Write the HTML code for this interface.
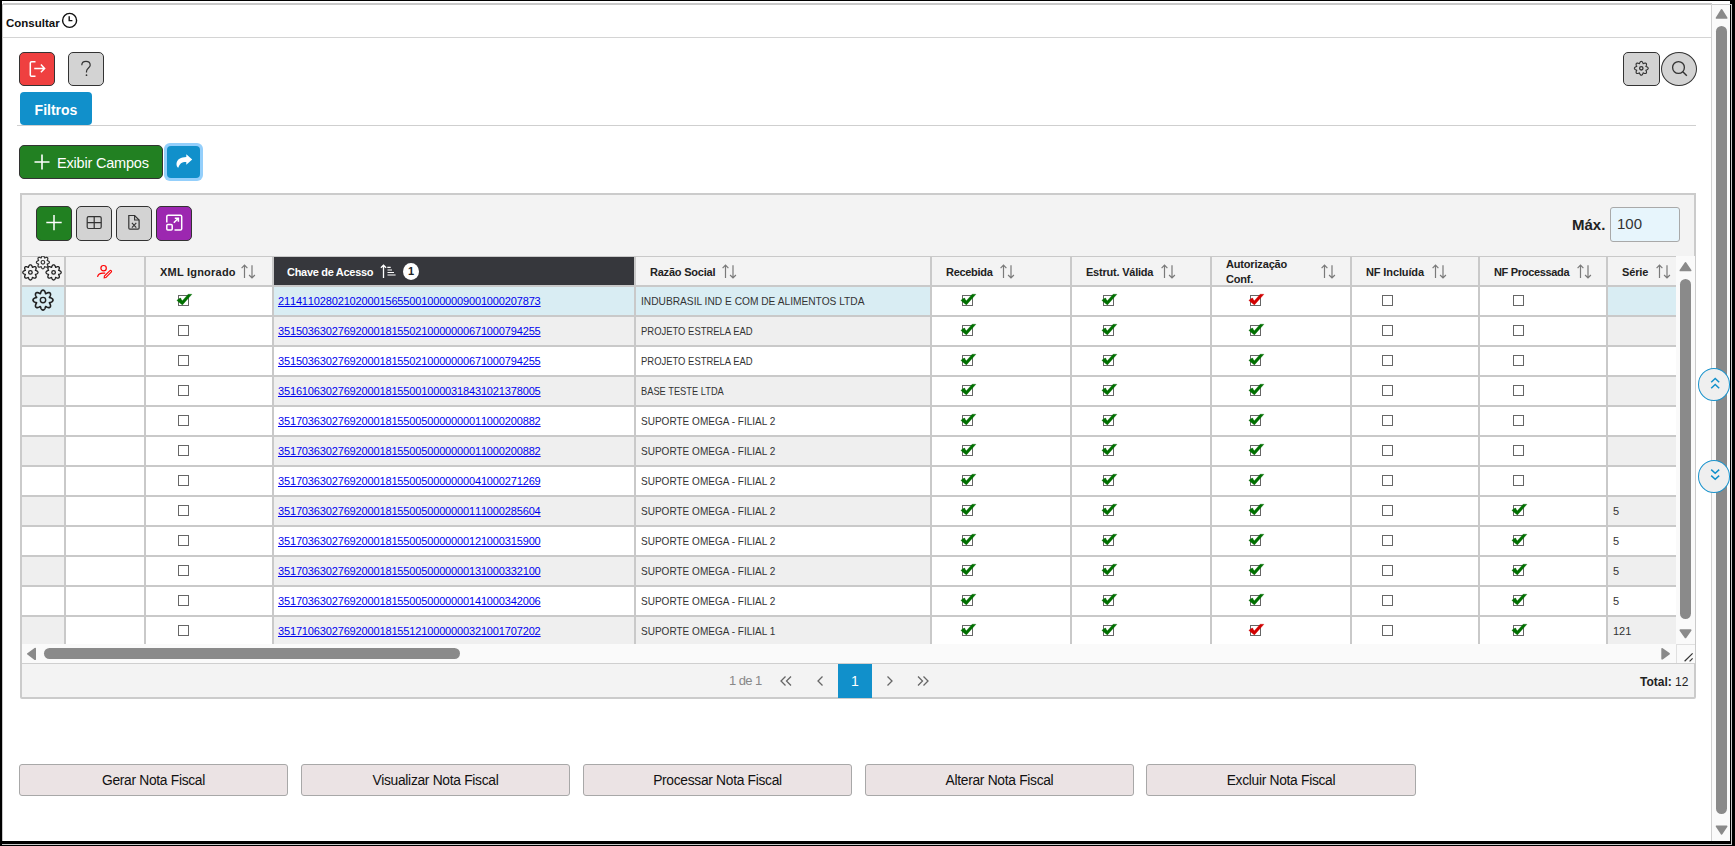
<!DOCTYPE html>
<html><head><meta charset="utf-8"><title>Consultar</title>
<style>
*{box-sizing:border-box}
html,body{margin:0;padding:0}
body{width:1735px;height:846px;overflow:hidden;background:#000;position:relative;font-family:"Liberation Sans", sans-serif;color:#222}
.a{position:absolute}
.btn{position:absolute;border:1px solid #333;border-radius:5px}
.hl{position:absolute;background:#c9c9c9}
.ht{position:absolute;font-size:11px;font-weight:bold;color:#222;white-space:nowrap;line-height:14px}
.cell{position:absolute;font-size:11px;color:#333;white-space:nowrap}
.lk{position:absolute;font-size:11px;color:#0000ee;text-decoration:underline;white-space:nowrap;letter-spacing:-0.15px;font-kerning:none}
.cb{position:absolute;width:11px;height:11px;border:1px solid #666;background:#fff}
.ck{position:absolute}
.bb{position:absolute;top:764px;width:269px;height:32px;background:#ebe3e4;border:1px solid #a8a8a8;border-radius:3px;font-size:13.8px;letter-spacing:-0.3px;color:#111;text-align:center;line-height:32px}
</style></head><body>

<div class="a" style="left:2px;top:1px;width:1728px;height:840px;background:#fff"></div>
<div class="a" style="left:2px;top:4px;width:1px;height:837px;background:#c8c8c8"></div>
<div class="a" style="left:3px;top:3px;width:1709px;height:2px;background:#c8c8c8"></div>
<div class="a" style="left:1712px;top:4px;width:20px;height:1px;background:#c8c8c8"></div>
<div class="a" style="left:1731px;top:4px;width:1px;height:841px;background:#c8c8c8"></div>
<div class="a" style="left:2px;top:844px;width:1730px;height:1px;background:#c8c8c8"></div>
<div class="a" style="left:6px;top:16px;font-size:11.5px;font-weight:bold;color:#111;line-height:14px">Consultar</div>
<svg class="a" style="left:61px;top:12px" width="17" height="17" viewBox="0 0 17 17"><circle cx="8.6" cy="8.4" r="7" fill="none" stroke="#111" stroke-width="1.4"/><path d="M8.2 4.2V8.6H11.4" fill="none" stroke="#111" stroke-width="1.4"/></svg>
<div class="a" style="left:3px;top:37px;width:1709px;height:1px;background:#d4d4d4"></div>
<div class="a" style="left:1711px;top:4px;width:1px;height:837px;background:#d0d0d0"></div>
<div class="a" style="left:1712px;top:5px;width:18px;height:836px;background:#fafafa"></div>
<svg class="a" style="left:1712px;top:5px" width="18" height="16" viewBox="0 0 18 16"><path d="M9.6 4.9L14.6 12.9H4.6Z" fill="#8a8a8a" stroke="#8a8a8a" stroke-width="1.8" stroke-linejoin="round"/></svg>
<div class="a" style="left:1716px;top:26px;width:11px;height:788px;background:#8a8a8a;border-radius:6px"></div>
<svg class="a" style="left:1712px;top:822px" width="18" height="16" viewBox="0 0 18 16"><path d="M4.6 4.3H14.6L9.6 11.8Z" fill="#8a8a8a" stroke="#8a8a8a" stroke-width="1.8" stroke-linejoin="round"/></svg>
<div class="btn" style="left:19px;top:52px;width:36px;height:34px;background:#ef4040"></div>
<svg class="a" style="left:19px;top:52px" width="36" height="34" viewBox="0 0 36 34"><path d="M16.5 9.8H12.6Q11.3 9.8 11.3 11.1V22.9Q11.3 24.2 12.6 24.2H16.5" fill="none" stroke="#fff" stroke-width="1.5"/><path d="M15.2 16.4H25.4M21.9 12.6L25.6 16.4L21.9 20.2" fill="none" stroke="#fff" stroke-width="1.5"/></svg>
<div class="btn" style="left:68px;top:52px;width:36px;height:34px;background:#d3d3d3"></div>
<svg class="a" style="left:68px;top:52px" width="36" height="34" viewBox="0 0 36 34"><path d="M13.8 13.2C13.8 10.7 15.6 9.4 18 9.4C20.4 9.4 22.2 11 22.2 13.2C22.2 15.8 18.5 16.4 18.5 19.4V20.4" fill="none" stroke="#333" stroke-width="1.2"/><circle cx="18.5" cy="23.2" r="0.85" fill="#333"/></svg>
<div class="btn" style="left:1623px;top:52px;width:37px;height:34px;background:#d3d3d3"></div>
<svg class="a" style="left:1623px;top:52px" width="37" height="34" viewBox="0 0 37 34"><path d="M25.20 16.30 L25.15 16.64 L24.99 16.96 L24.73 17.25 L24.40 17.51 L24.01 17.73 L23.59 17.91 L23.18 18.05 L22.83 18.18 L22.98 18.52 L23.18 18.91 L23.35 19.33 L23.47 19.76 L23.52 20.17 L23.49 20.56 L23.38 20.90 L23.18 21.18 L22.90 21.38 L22.56 21.49 L22.17 21.52 L21.76 21.47 L21.33 21.35 L20.91 21.18 L20.52 20.98 L20.18 20.83 L20.05 21.18 L19.91 21.59 L19.73 22.01 L19.51 22.40 L19.25 22.73 L18.96 22.99 L18.64 23.15 L18.30 23.20 L17.96 23.15 L17.64 22.99 L17.35 22.73 L17.09 22.40 L16.87 22.01 L16.69 21.59 L16.55 21.18 L16.42 20.83 L16.08 20.98 L15.69 21.18 L15.27 21.35 L14.84 21.47 L14.43 21.52 L14.04 21.49 L13.70 21.38 L13.42 21.18 L13.22 20.90 L13.11 20.56 L13.08 20.17 L13.13 19.76 L13.25 19.33 L13.42 18.91 L13.62 18.52 L13.77 18.18 L13.42 18.05 L13.01 17.91 L12.59 17.73 L12.20 17.51 L11.87 17.25 L11.61 16.96 L11.45 16.64 L11.40 16.30 L11.45 15.96 L11.61 15.64 L11.87 15.35 L12.20 15.09 L12.59 14.87 L13.01 14.69 L13.42 14.55 L13.77 14.42 L13.62 14.08 L13.42 13.69 L13.25 13.27 L13.13 12.84 L13.08 12.43 L13.11 12.04 L13.22 11.70 L13.42 11.42 L13.70 11.22 L14.04 11.11 L14.43 11.08 L14.84 11.13 L15.27 11.25 L15.69 11.42 L16.08 11.62 L16.42 11.77 L16.55 11.42 L16.69 11.01 L16.87 10.59 L17.09 10.20 L17.35 9.87 L17.64 9.61 L17.96 9.45 L18.30 9.40 L18.64 9.45 L18.96 9.61 L19.25 9.87 L19.51 10.20 L19.73 10.59 L19.91 11.01 L20.05 11.42 L20.18 11.77 L20.52 11.62 L20.91 11.42 L21.33 11.25 L21.76 11.13 L22.17 11.08 L22.56 11.11 L22.90 11.22 L23.18 11.42 L23.38 11.70 L23.49 12.04 L23.52 12.43 L23.47 12.84 L23.35 13.27 L23.18 13.69 L22.98 14.08 L22.83 14.42 L23.18 14.55 L23.59 14.69 L24.01 14.87 L24.40 15.09 L24.73 15.35 L24.99 15.64 L25.15 15.96Z" fill="none" stroke="#333" stroke-width="1.1" stroke-linejoin="round"/><circle cx="18.3" cy="16.3" r="1.7" fill="none" stroke="#333" stroke-width="1.3"/></svg>
<div class="a" style="left:1661px;top:52px;width:36px;height:34px;background:#d3d3d3;border:1px solid #333;border-radius:50%"></div>
<svg class="a" style="left:1661px;top:52px" width="36" height="35" viewBox="0 0 36 35"><circle cx="17.5" cy="15.5" r="5.9" fill="none" stroke="#333" stroke-width="1.3"/><path d="M21.8 19.8L25.8 23.8" stroke="#333" stroke-width="1.4"/></svg>
<div class="a" style="left:20px;top:92px;width:72px;height:33px;background:#1190cb;border-radius:4px;color:#fff;font-size:14px;font-weight:bold;text-align:center;line-height:37px">Filtros</div>
<div class="a" style="left:17px;top:125px;width:1679px;height:1px;background:#cfcfcf"></div>
<div class="btn" style="left:19px;top:145px;width:144px;height:34px;background:#228022;color:#fff;font-size:14.5px;line-height:34px"><span class="a" style="left:37px;top:0;letter-spacing:-0.2px">Exibir Campos</span></div>
<svg class="a" style="left:33px;top:153px" width="18" height="18" viewBox="0 0 18 18"><path d="M9 1.5V16.5M1.5 9H16.5" stroke="#fff" stroke-width="1.6"/></svg>
<div class="a" style="left:164px;top:143px;width:39px;height:38px;background:#94cffb;border-radius:6px"></div>
<div class="a" style="left:167px;top:146px;width:33px;height:32px;background:#1190cb;border-radius:4px"></div>
<svg class="a" style="left:167px;top:146px" width="33" height="32" viewBox="0 0 33 32"><path d="M19.3 8.2L25.2 13.5L19.3 18.8V15.9C15.2 15.7 12.6 17.2 11.3 21.8C10.2 21.3 9.3 19.6 9.5 17.5C10.1 13.2 13.8 11.1 19.3 11Z" fill="#fff"/></svg>
<div class="a" style="left:20px;top:193px;width:1676px;height:506px;background:#f3f3f3;border:2px solid #cbcbcb;border-radius:0 0 2px 2px"></div>
<div class="btn" style="left:36px;top:206px;width:36px;height:35px;background:#218021"></div>
<svg class="a" style="left:36px;top:206px" width="36" height="35" viewBox="0 0 36 35"><path d="M18 9V24.2M10.3 16.6H25.7" stroke="#fff" stroke-width="1.5"/></svg>
<div class="btn" style="left:76px;top:206px;width:36px;height:35px;background:#d3d3d3"></div>
<svg class="a" style="left:76px;top:206px" width="36" height="35" viewBox="0 0 36 35"><rect x="11.2" y="10.6" width="14" height="11.9" rx="1.5" fill="none" stroke="#333" stroke-width="1.2"/><path d="M18.2 10.6V22.5M11.2 16.55H25.2" stroke="#333" stroke-width="1.2"/></svg>
<div class="btn" style="left:116px;top:206px;width:36px;height:35px;background:#d3d3d3"></div>
<svg class="a" style="left:116px;top:206px" width="36" height="35" viewBox="0 0 36 35"><path d="M12.8 9.5H18.6L23.1 14V22C23.1 22.7 22.6 23.2 21.9 23.2H14C13.3 23.2 12.8 22.7 12.8 22Z" fill="none" stroke="#333" stroke-width="1.2"/><path d="M18.6 9.5V14H23.1" fill="none" stroke="#333" stroke-width="1.1"/><path d="M15.9 16.8L20.3 21.6M20.3 16.8L15.9 21.6" stroke="#333" stroke-width="1.1"/></svg>
<div class="btn" style="left:156px;top:206px;width:36px;height:35px;background:#9c27b0"></div>
<svg class="a" style="left:156px;top:206px" width="36" height="35" viewBox="0 0 36 35"><path d="M10.8 16.5V10.5C10.8 9.7 11.3 9.2 12.1 9.2H24.4C25.2 9.2 25.7 9.7 25.7 10.5V22.8C25.7 23.6 25.2 24.1 24.4 24.1H18.5" fill="none" stroke="#fff" stroke-width="1.5"/><rect x="10.8" y="18.6" width="5.4" height="5.4" rx="1" fill="none" stroke="#fff" stroke-width="1.5"/><path d="M17.8 16.8L22.2 12.4M18.8 12.2H22.4V15.8" fill="none" stroke="#fff" stroke-width="1.5"/></svg>
<div class="a" style="left:1572px;top:216px;font-size:15px;font-weight:bold;color:#222;line-height:18px">Máx.</div>
<div class="a" style="left:1610px;top:207px;width:70px;height:35px;background:#e7f5fc;border:1px solid #a9a9a9;border-radius:3px;font-size:15px;color:#333;line-height:32px;padding-left:6px">100</div>
<div class="a" style="left:22px;top:256px;width:1654px;height:388px;overflow:hidden;background:#fff">
<div class="a" style="left:0px;top:0px;width:1654px;height:1px;background:#c9c9c9;"></div>
<div class="a" style="left:0px;top:1px;width:1654px;height:28px;background:#f3f3f3;"></div>
<div class="a" style="left:252px;top:1px;width:360px;height:28px;background:#36373c;"></div>
<div class="a" style="left:0px;top:31px;width:42px;height:28px;background:#d9edf3;"></div>
<div class="a" style="left:252px;top:31px;width:360px;height:28px;background:#d9edf3;"></div>
<div class="a" style="left:614px;top:31px;width:294px;height:28px;background:#d9edf3;"></div>
<div class="a" style="left:1586px;top:31px;width:68px;height:28px;background:#d9edf3;"></div>
<div class="a" style="left:0px;top:61px;width:42px;height:28px;background:#efefef;"></div>
<div class="a" style="left:252px;top:61px;width:360px;height:28px;background:#efefef;"></div>
<div class="a" style="left:614px;top:61px;width:294px;height:28px;background:#efefef;"></div>
<div class="a" style="left:1586px;top:61px;width:68px;height:28px;background:#efefef;"></div>
<div class="a" style="left:0px;top:91px;width:42px;height:28px;background:#ffffff;"></div>
<div class="a" style="left:252px;top:91px;width:360px;height:28px;background:#ffffff;"></div>
<div class="a" style="left:614px;top:91px;width:294px;height:28px;background:#ffffff;"></div>
<div class="a" style="left:1586px;top:91px;width:68px;height:28px;background:#ffffff;"></div>
<div class="a" style="left:0px;top:121px;width:42px;height:28px;background:#efefef;"></div>
<div class="a" style="left:252px;top:121px;width:360px;height:28px;background:#efefef;"></div>
<div class="a" style="left:614px;top:121px;width:294px;height:28px;background:#efefef;"></div>
<div class="a" style="left:1586px;top:121px;width:68px;height:28px;background:#efefef;"></div>
<div class="a" style="left:0px;top:151px;width:42px;height:28px;background:#ffffff;"></div>
<div class="a" style="left:252px;top:151px;width:360px;height:28px;background:#ffffff;"></div>
<div class="a" style="left:614px;top:151px;width:294px;height:28px;background:#ffffff;"></div>
<div class="a" style="left:1586px;top:151px;width:68px;height:28px;background:#ffffff;"></div>
<div class="a" style="left:0px;top:181px;width:42px;height:28px;background:#efefef;"></div>
<div class="a" style="left:252px;top:181px;width:360px;height:28px;background:#efefef;"></div>
<div class="a" style="left:614px;top:181px;width:294px;height:28px;background:#efefef;"></div>
<div class="a" style="left:1586px;top:181px;width:68px;height:28px;background:#efefef;"></div>
<div class="a" style="left:0px;top:211px;width:42px;height:28px;background:#ffffff;"></div>
<div class="a" style="left:252px;top:211px;width:360px;height:28px;background:#ffffff;"></div>
<div class="a" style="left:614px;top:211px;width:294px;height:28px;background:#ffffff;"></div>
<div class="a" style="left:1586px;top:211px;width:68px;height:28px;background:#ffffff;"></div>
<div class="a" style="left:0px;top:241px;width:42px;height:28px;background:#efefef;"></div>
<div class="a" style="left:252px;top:241px;width:360px;height:28px;background:#efefef;"></div>
<div class="a" style="left:614px;top:241px;width:294px;height:28px;background:#efefef;"></div>
<div class="a" style="left:1586px;top:241px;width:68px;height:28px;background:#efefef;"></div>
<div class="a" style="left:0px;top:271px;width:42px;height:28px;background:#ffffff;"></div>
<div class="a" style="left:252px;top:271px;width:360px;height:28px;background:#ffffff;"></div>
<div class="a" style="left:614px;top:271px;width:294px;height:28px;background:#ffffff;"></div>
<div class="a" style="left:1586px;top:271px;width:68px;height:28px;background:#ffffff;"></div>
<div class="a" style="left:0px;top:301px;width:42px;height:28px;background:#efefef;"></div>
<div class="a" style="left:252px;top:301px;width:360px;height:28px;background:#efefef;"></div>
<div class="a" style="left:614px;top:301px;width:294px;height:28px;background:#efefef;"></div>
<div class="a" style="left:1586px;top:301px;width:68px;height:28px;background:#efefef;"></div>
<div class="a" style="left:0px;top:331px;width:42px;height:28px;background:#ffffff;"></div>
<div class="a" style="left:252px;top:331px;width:360px;height:28px;background:#ffffff;"></div>
<div class="a" style="left:614px;top:331px;width:294px;height:28px;background:#ffffff;"></div>
<div class="a" style="left:1586px;top:331px;width:68px;height:28px;background:#ffffff;"></div>
<div class="a" style="left:0px;top:361px;width:42px;height:28px;background:#efefef;"></div>
<div class="a" style="left:252px;top:361px;width:360px;height:28px;background:#efefef;"></div>
<div class="a" style="left:614px;top:361px;width:294px;height:28px;background:#efefef;"></div>
<div class="a" style="left:1586px;top:361px;width:68px;height:28px;background:#efefef;"></div>
<div class="a" style="left:0px;top:29px;width:1654px;height:2px;background:#c9c9c9;"></div>
<div class="a" style="left:0px;top:59px;width:1654px;height:2px;background:#c9c9c9;"></div>
<div class="a" style="left:0px;top:89px;width:1654px;height:2px;background:#c9c9c9;"></div>
<div class="a" style="left:0px;top:119px;width:1654px;height:2px;background:#c9c9c9;"></div>
<div class="a" style="left:0px;top:149px;width:1654px;height:2px;background:#c9c9c9;"></div>
<div class="a" style="left:0px;top:179px;width:1654px;height:2px;background:#c9c9c9;"></div>
<div class="a" style="left:0px;top:209px;width:1654px;height:2px;background:#c9c9c9;"></div>
<div class="a" style="left:0px;top:239px;width:1654px;height:2px;background:#c9c9c9;"></div>
<div class="a" style="left:0px;top:269px;width:1654px;height:2px;background:#c9c9c9;"></div>
<div class="a" style="left:0px;top:299px;width:1654px;height:2px;background:#c9c9c9;"></div>
<div class="a" style="left:0px;top:329px;width:1654px;height:2px;background:#c9c9c9;"></div>
<div class="a" style="left:0px;top:359px;width:1654px;height:2px;background:#c9c9c9;"></div>
<div class="a" style="left:0px;top:389px;width:1654px;height:2px;background:#c9c9c9;"></div>
<div class="a" style="left:42px;top:1px;width:2px;height:387px;background:#c9c9c9;"></div>
<div class="a" style="left:122px;top:1px;width:2px;height:387px;background:#c9c9c9;"></div>
<div class="a" style="left:250px;top:1px;width:2px;height:387px;background:#c9c9c9;"></div>
<div class="a" style="left:612px;top:1px;width:2px;height:387px;background:#c9c9c9;"></div>
<div class="a" style="left:908px;top:1px;width:2px;height:387px;background:#c9c9c9;"></div>
<div class="a" style="left:1048px;top:1px;width:2px;height:387px;background:#c9c9c9;"></div>
<div class="a" style="left:1188px;top:1px;width:2px;height:387px;background:#c9c9c9;"></div>
<div class="a" style="left:1328px;top:1px;width:2px;height:387px;background:#c9c9c9;"></div>
<div class="a" style="left:1456px;top:1px;width:2px;height:387px;background:#c9c9c9;"></div>
<div class="a" style="left:1584px;top:1px;width:2px;height:387px;background:#c9c9c9;"></div>
</div>
<div class="ht" style="left:160px;top:265px;letter-spacing:0.22px">XML Ignorado</div>
<svg class="a" style="left:241px;top:264px" width="15" height="15" viewBox="0 0 15 15"><path d="M3.5 1.2V14M0.6 4.2L3.5 1.2L6.4 4.2" fill="none" stroke="#7a7a7a" stroke-width="1.2"/><path d="M11 1.2V14M8.1 11L11 14L13.9 11" fill="none" stroke="#7a7a7a" stroke-width="1.2"/></svg>
<div class="ht" style="left:650px;top:265px;letter-spacing:-0.22px">Razão Social</div>
<svg class="a" style="left:722px;top:264px" width="15" height="15" viewBox="0 0 15 15"><path d="M3.5 1.2V14M0.6 4.2L3.5 1.2L6.4 4.2" fill="none" stroke="#7a7a7a" stroke-width="1.2"/><path d="M11 1.2V14M8.1 11L11 14L13.9 11" fill="none" stroke="#7a7a7a" stroke-width="1.2"/></svg>
<div class="ht" style="left:946px;top:265px;letter-spacing:-0.3px">Recebida</div>
<svg class="a" style="left:1000px;top:264px" width="15" height="15" viewBox="0 0 15 15"><path d="M3.5 1.2V14M0.6 4.2L3.5 1.2L6.4 4.2" fill="none" stroke="#7a7a7a" stroke-width="1.2"/><path d="M11 1.2V14M8.1 11L11 14L13.9 11" fill="none" stroke="#7a7a7a" stroke-width="1.2"/></svg>
<div class="ht" style="left:1086px;top:265px;letter-spacing:-0.22px">Estrut. Válida</div>
<svg class="a" style="left:1161px;top:264px" width="15" height="15" viewBox="0 0 15 15"><path d="M3.5 1.2V14M0.6 4.2L3.5 1.2L6.4 4.2" fill="none" stroke="#7a7a7a" stroke-width="1.2"/><path d="M11 1.2V14M8.1 11L11 14L13.9 11" fill="none" stroke="#7a7a7a" stroke-width="1.2"/></svg>
<div class="ht" style="left:1366px;top:265px;letter-spacing:-0.12px">NF Incluída</div>
<svg class="a" style="left:1432px;top:264px" width="15" height="15" viewBox="0 0 15 15"><path d="M3.5 1.2V14M0.6 4.2L3.5 1.2L6.4 4.2" fill="none" stroke="#7a7a7a" stroke-width="1.2"/><path d="M11 1.2V14M8.1 11L11 14L13.9 11" fill="none" stroke="#7a7a7a" stroke-width="1.2"/></svg>
<div class="ht" style="left:1494px;top:265px;letter-spacing:-0.32px">NF Processada</div>
<svg class="a" style="left:1577px;top:264px" width="15" height="15" viewBox="0 0 15 15"><path d="M3.5 1.2V14M0.6 4.2L3.5 1.2L6.4 4.2" fill="none" stroke="#7a7a7a" stroke-width="1.2"/><path d="M11 1.2V14M8.1 11L11 14L13.9 11" fill="none" stroke="#7a7a7a" stroke-width="1.2"/></svg>
<div class="ht" style="left:1622px;top:265px;letter-spacing:-0.15px">Série</div>
<svg class="a" style="left:1656px;top:264px" width="15" height="15" viewBox="0 0 15 15"><path d="M3.5 1.2V14M0.6 4.2L3.5 1.2L6.4 4.2" fill="none" stroke="#7a7a7a" stroke-width="1.2"/><path d="M11 1.2V14M8.1 11L11 14L13.9 11" fill="none" stroke="#7a7a7a" stroke-width="1.2"/></svg>
<div class="ht" style="left:1226px;top:257px;line-height:15px;letter-spacing:-0.17px">Autorização<br>Conf.</div>
<svg class="a" style="left:1321px;top:264px" width="15" height="15" viewBox="0 0 15 15"><path d="M3.5 1.2V14M0.6 4.2L3.5 1.2L6.4 4.2" fill="none" stroke="#7a7a7a" stroke-width="1.2"/><path d="M11 1.2V14M8.1 11L11 14L13.9 11" fill="none" stroke="#7a7a7a" stroke-width="1.2"/></svg>
<div class="ht" style="left:287px;top:265px;color:#fff;letter-spacing:-0.3px">Chave de Acesso</div>
<svg class="a" style="left:380px;top:262px" width="20" height="18" viewBox="0 0 20 18"><path d="M3.5 3.2V16M0.9 5.8L3.5 3.2L6.1 5.8" fill="none" stroke="#fff" stroke-width="1.3"/><path d="M7.3 5.3H10.7M7.5 8H12M7.5 10.5H14M7.5 13H15.6" stroke="#fff" stroke-width="1.2"/></svg>
<div class="a" style="left:403px;top:263px;width:16px;height:17px;border-radius:50%;background:#fff;color:#222;font-size:11px;font-weight:bold;text-align:center;line-height:17px">1</div>
<svg class="a" style="left:22px;top:256px" width="42" height="29" viewBox="0 0 42 29"><path d="M27.40 6.30 L27.35 6.62 L27.20 6.92 L26.96 7.20 L26.64 7.44 L26.27 7.65 L25.88 7.81 L25.48 7.94 L25.15 8.06 L25.30 8.38 L25.49 8.75 L25.65 9.15 L25.77 9.55 L25.82 9.95 L25.79 10.31 L25.68 10.64 L25.50 10.90 L25.24 11.08 L24.91 11.19 L24.55 11.22 L24.15 11.17 L23.75 11.05 L23.35 10.89 L22.98 10.70 L22.66 10.55 L22.54 10.88 L22.41 11.28 L22.25 11.67 L22.04 12.04 L21.80 12.36 L21.52 12.60 L21.22 12.75 L20.90 12.80 L20.58 12.75 L20.28 12.60 L20.00 12.36 L19.76 12.04 L19.55 11.67 L19.39 11.28 L19.26 10.88 L19.14 10.55 L18.82 10.70 L18.45 10.89 L18.05 11.05 L17.65 11.17 L17.25 11.22 L16.89 11.19 L16.56 11.08 L16.30 10.90 L16.12 10.64 L16.01 10.31 L15.98 9.95 L16.03 9.55 L16.15 9.15 L16.31 8.75 L16.50 8.38 L16.65 8.06 L16.32 7.94 L15.92 7.81 L15.53 7.65 L15.16 7.44 L14.84 7.20 L14.60 6.92 L14.45 6.62 L14.40 6.30 L14.45 5.98 L14.60 5.68 L14.84 5.40 L15.16 5.16 L15.53 4.95 L15.92 4.79 L16.32 4.66 L16.65 4.54 L16.50 4.22 L16.31 3.85 L16.15 3.45 L16.03 3.05 L15.98 2.65 L16.01 2.29 L16.12 1.96 L16.30 1.70 L16.56 1.52 L16.89 1.41 L17.25 1.38 L17.65 1.43 L18.05 1.55 L18.45 1.71 L18.82 1.90 L19.14 2.05 L19.26 1.72 L19.39 1.32 L19.55 0.93 L19.76 0.56 L20.00 0.24 L20.28 0.00 L20.58 -0.15 L20.90 -0.20 L21.22 -0.15 L21.52 0.00 L21.80 0.24 L22.04 0.56 L22.25 0.93 L22.41 1.32 L22.54 1.72 L22.66 2.05 L22.98 1.90 L23.35 1.71 L23.75 1.55 L24.15 1.43 L24.55 1.38 L24.91 1.41 L25.24 1.52 L25.50 1.70 L25.68 1.96 L25.79 2.29 L25.82 2.65 L25.77 3.05 L25.65 3.45 L25.49 3.85 L25.30 4.22 L25.15 4.54 L25.48 4.66 L25.88 4.79 L26.27 4.95 L26.64 5.16 L26.96 5.40 L27.20 5.68 L27.35 5.98Z" fill="none" stroke="#333" stroke-width="1.2" stroke-linejoin="round"/><circle cx="20.9" cy="6.3" r="1.8" fill="none" stroke="#333" stroke-width="1.2"/><path d="M16.00 16.40 L15.94 16.77 L15.76 17.13 L15.49 17.45 L15.12 17.74 L14.69 17.98 L14.23 18.17 L13.78 18.32 L13.39 18.47 L13.56 18.84 L13.78 19.27 L13.96 19.73 L14.10 20.21 L14.15 20.67 L14.12 21.09 L13.99 21.47 L13.77 21.77 L13.47 21.99 L13.09 22.12 L12.67 22.15 L12.21 22.10 L11.73 21.96 L11.27 21.78 L10.84 21.56 L10.47 21.39 L10.32 21.78 L10.17 22.23 L9.98 22.69 L9.74 23.12 L9.45 23.49 L9.13 23.76 L8.77 23.94 L8.40 24.00 L8.03 23.94 L7.67 23.76 L7.35 23.49 L7.06 23.12 L6.82 22.69 L6.63 22.23 L6.48 21.78 L6.33 21.39 L5.96 21.56 L5.53 21.78 L5.07 21.96 L4.59 22.10 L4.13 22.15 L3.71 22.12 L3.33 21.99 L3.03 21.77 L2.81 21.47 L2.68 21.09 L2.65 20.67 L2.70 20.21 L2.84 19.73 L3.02 19.27 L3.24 18.84 L3.41 18.47 L3.02 18.32 L2.57 18.17 L2.11 17.98 L1.68 17.74 L1.31 17.45 L1.04 17.13 L0.86 16.77 L0.80 16.40 L0.86 16.03 L1.04 15.67 L1.31 15.35 L1.68 15.06 L2.11 14.82 L2.57 14.63 L3.02 14.48 L3.41 14.33 L3.24 13.96 L3.02 13.53 L2.84 13.07 L2.70 12.59 L2.65 12.13 L2.68 11.71 L2.81 11.33 L3.03 11.03 L3.33 10.81 L3.71 10.68 L4.13 10.65 L4.59 10.70 L5.07 10.84 L5.53 11.02 L5.96 11.24 L6.33 11.41 L6.48 11.02 L6.63 10.57 L6.82 10.11 L7.06 9.68 L7.35 9.31 L7.67 9.04 L8.03 8.86 L8.40 8.80 L8.77 8.86 L9.13 9.04 L9.45 9.31 L9.74 9.68 L9.98 10.11 L10.17 10.57 L10.32 11.02 L10.47 11.41 L10.84 11.24 L11.27 11.02 L11.73 10.84 L12.21 10.70 L12.67 10.65 L13.09 10.68 L13.47 10.81 L13.77 11.03 L13.99 11.33 L14.12 11.71 L14.15 12.13 L14.10 12.59 L13.96 13.07 L13.78 13.53 L13.56 13.96 L13.39 14.33 L13.78 14.48 L14.23 14.63 L14.69 14.82 L15.12 15.06 L15.49 15.35 L15.76 15.67 L15.94 16.03Z" fill="none" stroke="#222" stroke-width="1.3" stroke-linejoin="round"/><circle cx="8.4" cy="16.4" r="1.8" fill="none" stroke="#222" stroke-width="1.3"/><path d="M39.20 16.40 L39.14 16.77 L38.96 17.13 L38.69 17.45 L38.32 17.74 L37.89 17.98 L37.43 18.17 L36.98 18.32 L36.59 18.47 L36.76 18.84 L36.98 19.27 L37.16 19.73 L37.30 20.21 L37.35 20.67 L37.32 21.09 L37.19 21.47 L36.97 21.77 L36.67 21.99 L36.29 22.12 L35.87 22.15 L35.41 22.10 L34.93 21.96 L34.47 21.78 L34.04 21.56 L33.67 21.39 L33.52 21.78 L33.37 22.23 L33.18 22.69 L32.94 23.12 L32.65 23.49 L32.33 23.76 L31.97 23.94 L31.60 24.00 L31.23 23.94 L30.87 23.76 L30.55 23.49 L30.26 23.12 L30.02 22.69 L29.83 22.23 L29.68 21.78 L29.53 21.39 L29.16 21.56 L28.73 21.78 L28.27 21.96 L27.79 22.10 L27.33 22.15 L26.91 22.12 L26.53 21.99 L26.23 21.77 L26.01 21.47 L25.88 21.09 L25.85 20.67 L25.90 20.21 L26.04 19.73 L26.22 19.27 L26.44 18.84 L26.61 18.47 L26.22 18.32 L25.77 18.17 L25.31 17.98 L24.88 17.74 L24.51 17.45 L24.24 17.13 L24.06 16.77 L24.00 16.40 L24.06 16.03 L24.24 15.67 L24.51 15.35 L24.88 15.06 L25.31 14.82 L25.77 14.63 L26.22 14.48 L26.61 14.33 L26.44 13.96 L26.22 13.53 L26.04 13.07 L25.90 12.59 L25.85 12.13 L25.88 11.71 L26.01 11.33 L26.23 11.03 L26.53 10.81 L26.91 10.68 L27.33 10.65 L27.79 10.70 L28.27 10.84 L28.73 11.02 L29.16 11.24 L29.53 11.41 L29.68 11.02 L29.83 10.57 L30.02 10.11 L30.26 9.68 L30.55 9.31 L30.87 9.04 L31.23 8.86 L31.60 8.80 L31.97 8.86 L32.33 9.04 L32.65 9.31 L32.94 9.68 L33.18 10.11 L33.37 10.57 L33.52 11.02 L33.67 11.41 L34.04 11.24 L34.47 11.02 L34.93 10.84 L35.41 10.70 L35.87 10.65 L36.29 10.68 L36.67 10.81 L36.97 11.03 L37.19 11.33 L37.32 11.71 L37.35 12.13 L37.30 12.59 L37.16 13.07 L36.98 13.53 L36.76 13.96 L36.59 14.33 L36.98 14.48 L37.43 14.63 L37.89 14.82 L38.32 15.06 L38.69 15.35 L38.96 15.67 L39.14 16.03Z" fill="none" stroke="#222" stroke-width="1.3" stroke-linejoin="round"/><circle cx="31.6" cy="16.4" r="1.8" fill="none" stroke="#222" stroke-width="1.3"/></svg>
<svg class="a" style="left:94px;top:263px" width="20" height="17" viewBox="0 0 20 17"><circle cx="9.6" cy="5.2" r="2.7" fill="none" stroke="#f00" stroke-width="1.2"/><path d="M3.5 13.9C4.1 11.6 6.1 10.2 9 10.2H11.2" fill="none" stroke="#f00" stroke-width="1.2"/><path d="M11.8 14.6L17.2 9.2C17.7 8.7 17.7 8.1 17.2 7.7C16.8 7.3 16.2 7.3 15.7 7.8L10.4 13.1L10.2 14.8Z" fill="none" stroke="#f00" stroke-width="1.1"/></svg>
<div class="lk" style="left:278px;top:294px;line-height:14px">21141102802102000156550010000009001000207873</div>
<div class="cell" style="left:641px;top:294px;line-height:14px;transform:scaleX(0.9265);transform-origin:0 0">INDUBRASIL IND E COM DE ALIMENTOS LTDA</div>
<div class="cb" style="left:178px;top:295px"></div>
<svg class="a" style="left:176px;top:293px" width="18" height="14" viewBox="0 0 18 14"><path d="M0.9 7.3 L4.1 5.1 L4.6 5.0 L5.3 6.5 L6.4 7.7 L12.2 1.2 L15.9 1.3 L6.4 11.9 L1.7 8.2Z" fill="#006f00" stroke="#006f00" stroke-width="0.35" stroke-linejoin="round"/></svg>
<div class="cb" style="left:962px;top:295px"></div>
<svg class="a" style="left:960px;top:293px" width="18" height="14" viewBox="0 0 18 14"><path d="M0.9 7.3 L4.1 5.1 L4.6 5.0 L5.3 6.5 L6.4 7.7 L12.2 1.2 L15.9 1.3 L6.4 11.9 L1.7 8.2Z" fill="#006f00" stroke="#006f00" stroke-width="0.35" stroke-linejoin="round"/></svg>
<div class="cb" style="left:1103px;top:295px"></div>
<svg class="a" style="left:1101px;top:293px" width="18" height="14" viewBox="0 0 18 14"><path d="M0.9 7.3 L4.1 5.1 L4.6 5.0 L5.3 6.5 L6.4 7.7 L12.2 1.2 L15.9 1.3 L6.4 11.9 L1.7 8.2Z" fill="#006f00" stroke="#006f00" stroke-width="0.35" stroke-linejoin="round"/></svg>
<div class="cb" style="left:1250px;top:295px"></div>
<svg class="a" style="left:1248px;top:293px" width="18" height="14" viewBox="0 0 18 14"><path d="M0.9 7.3 L4.1 5.1 L4.6 5.0 L5.3 6.5 L6.4 7.7 L12.2 1.2 L15.9 1.3 L6.4 11.9 L1.7 8.2Z" fill="#d10000" stroke="#d10000" stroke-width="0.35" stroke-linejoin="round"/></svg>
<div class="cb" style="left:1382px;top:295px"></div>
<div class="cb" style="left:1513px;top:295px"></div>
<svg class="a" style="left:31px;top:288px" width="24" height="24" viewBox="0 0 24 24"><path d="M22.00 12.10 L21.92 12.59 L21.67 13.05 L21.28 13.48 L20.77 13.85 L20.18 14.15 L19.54 14.39 L18.91 14.57 L18.37 14.74 L18.63 15.24 L18.95 15.81 L19.23 16.43 L19.44 17.07 L19.54 17.69 L19.51 18.27 L19.36 18.77 L19.07 19.17 L18.67 19.46 L18.17 19.61 L17.59 19.64 L16.97 19.54 L16.33 19.33 L15.71 19.05 L15.14 18.73 L14.64 18.47 L14.47 19.01 L14.29 19.64 L14.05 20.28 L13.75 20.87 L13.38 21.38 L12.95 21.77 L12.49 22.02 L12.00 22.10 L11.51 22.02 L11.05 21.77 L10.62 21.38 L10.25 20.87 L9.95 20.28 L9.71 19.64 L9.53 19.01 L9.36 18.47 L8.86 18.73 L8.29 19.05 L7.67 19.33 L7.03 19.54 L6.41 19.64 L5.83 19.61 L5.33 19.46 L4.93 19.17 L4.64 18.77 L4.49 18.27 L4.46 17.69 L4.56 17.07 L4.77 16.43 L5.05 15.81 L5.37 15.24 L5.63 14.74 L5.09 14.57 L4.46 14.39 L3.82 14.15 L3.23 13.85 L2.72 13.48 L2.33 13.05 L2.08 12.59 L2.00 12.10 L2.08 11.61 L2.33 11.15 L2.72 10.72 L3.23 10.35 L3.82 10.05 L4.46 9.81 L5.09 9.63 L5.63 9.46 L5.37 8.96 L5.05 8.39 L4.77 7.77 L4.56 7.13 L4.46 6.51 L4.49 5.93 L4.64 5.43 L4.93 5.03 L5.33 4.74 L5.83 4.59 L6.41 4.56 L7.03 4.66 L7.67 4.87 L8.29 5.15 L8.86 5.47 L9.36 5.73 L9.53 5.19 L9.71 4.56 L9.95 3.92 L10.25 3.33 L10.62 2.82 L11.05 2.43 L11.51 2.18 L12.00 2.10 L12.49 2.18 L12.95 2.43 L13.38 2.82 L13.75 3.33 L14.05 3.92 L14.29 4.56 L14.47 5.19 L14.64 5.73 L15.14 5.47 L15.71 5.15 L16.33 4.87 L16.97 4.66 L17.59 4.56 L18.17 4.59 L18.67 4.74 L19.07 5.03 L19.36 5.43 L19.51 5.93 L19.54 6.51 L19.44 7.13 L19.23 7.77 L18.95 8.39 L18.63 8.96 L18.37 9.46 L18.91 9.63 L19.54 9.81 L20.18 10.05 L20.77 10.35 L21.28 10.72 L21.67 11.15 L21.92 11.61Z" fill="none" stroke="#222" stroke-width="1.6" stroke-linejoin="round"/><circle cx="12" cy="12.1" r="2.7" fill="none" stroke="#222" stroke-width="1.4"/></svg>
<div class="lk" style="left:278px;top:324px;line-height:14px">35150363027692000181550210000000671000794255</div>
<div class="cell" style="left:641px;top:324px;line-height:14px;transform:scaleX(0.8591);transform-origin:0 0">PROJETO ESTRELA EAD</div>
<div class="cb" style="left:178px;top:325px"></div>
<div class="cb" style="left:962px;top:325px"></div>
<svg class="a" style="left:960px;top:323px" width="18" height="14" viewBox="0 0 18 14"><path d="M0.9 7.3 L4.1 5.1 L4.6 5.0 L5.3 6.5 L6.4 7.7 L12.2 1.2 L15.9 1.3 L6.4 11.9 L1.7 8.2Z" fill="#006f00" stroke="#006f00" stroke-width="0.35" stroke-linejoin="round"/></svg>
<div class="cb" style="left:1103px;top:325px"></div>
<svg class="a" style="left:1101px;top:323px" width="18" height="14" viewBox="0 0 18 14"><path d="M0.9 7.3 L4.1 5.1 L4.6 5.0 L5.3 6.5 L6.4 7.7 L12.2 1.2 L15.9 1.3 L6.4 11.9 L1.7 8.2Z" fill="#006f00" stroke="#006f00" stroke-width="0.35" stroke-linejoin="round"/></svg>
<div class="cb" style="left:1250px;top:325px"></div>
<svg class="a" style="left:1248px;top:323px" width="18" height="14" viewBox="0 0 18 14"><path d="M0.9 7.3 L4.1 5.1 L4.6 5.0 L5.3 6.5 L6.4 7.7 L12.2 1.2 L15.9 1.3 L6.4 11.9 L1.7 8.2Z" fill="#006f00" stroke="#006f00" stroke-width="0.35" stroke-linejoin="round"/></svg>
<div class="cb" style="left:1382px;top:325px"></div>
<div class="cb" style="left:1513px;top:325px"></div>
<div class="lk" style="left:278px;top:354px;line-height:14px">35150363027692000181550210000000671000794255</div>
<div class="cell" style="left:641px;top:354px;line-height:14px;transform:scaleX(0.8591);transform-origin:0 0">PROJETO ESTRELA EAD</div>
<div class="cb" style="left:178px;top:355px"></div>
<div class="cb" style="left:962px;top:355px"></div>
<svg class="a" style="left:960px;top:353px" width="18" height="14" viewBox="0 0 18 14"><path d="M0.9 7.3 L4.1 5.1 L4.6 5.0 L5.3 6.5 L6.4 7.7 L12.2 1.2 L15.9 1.3 L6.4 11.9 L1.7 8.2Z" fill="#006f00" stroke="#006f00" stroke-width="0.35" stroke-linejoin="round"/></svg>
<div class="cb" style="left:1103px;top:355px"></div>
<svg class="a" style="left:1101px;top:353px" width="18" height="14" viewBox="0 0 18 14"><path d="M0.9 7.3 L4.1 5.1 L4.6 5.0 L5.3 6.5 L6.4 7.7 L12.2 1.2 L15.9 1.3 L6.4 11.9 L1.7 8.2Z" fill="#006f00" stroke="#006f00" stroke-width="0.35" stroke-linejoin="round"/></svg>
<div class="cb" style="left:1250px;top:355px"></div>
<svg class="a" style="left:1248px;top:353px" width="18" height="14" viewBox="0 0 18 14"><path d="M0.9 7.3 L4.1 5.1 L4.6 5.0 L5.3 6.5 L6.4 7.7 L12.2 1.2 L15.9 1.3 L6.4 11.9 L1.7 8.2Z" fill="#006f00" stroke="#006f00" stroke-width="0.35" stroke-linejoin="round"/></svg>
<div class="cb" style="left:1382px;top:355px"></div>
<div class="cb" style="left:1513px;top:355px"></div>
<div class="lk" style="left:278px;top:384px;line-height:14px">35161063027692000181550010000318431021378005</div>
<div class="cell" style="left:641px;top:384px;line-height:14px;transform:scaleX(0.8447);transform-origin:0 0">BASE TESTE LTDA</div>
<div class="cb" style="left:178px;top:385px"></div>
<div class="cb" style="left:962px;top:385px"></div>
<svg class="a" style="left:960px;top:383px" width="18" height="14" viewBox="0 0 18 14"><path d="M0.9 7.3 L4.1 5.1 L4.6 5.0 L5.3 6.5 L6.4 7.7 L12.2 1.2 L15.9 1.3 L6.4 11.9 L1.7 8.2Z" fill="#006f00" stroke="#006f00" stroke-width="0.35" stroke-linejoin="round"/></svg>
<div class="cb" style="left:1103px;top:385px"></div>
<svg class="a" style="left:1101px;top:383px" width="18" height="14" viewBox="0 0 18 14"><path d="M0.9 7.3 L4.1 5.1 L4.6 5.0 L5.3 6.5 L6.4 7.7 L12.2 1.2 L15.9 1.3 L6.4 11.9 L1.7 8.2Z" fill="#006f00" stroke="#006f00" stroke-width="0.35" stroke-linejoin="round"/></svg>
<div class="cb" style="left:1250px;top:385px"></div>
<svg class="a" style="left:1248px;top:383px" width="18" height="14" viewBox="0 0 18 14"><path d="M0.9 7.3 L4.1 5.1 L4.6 5.0 L5.3 6.5 L6.4 7.7 L12.2 1.2 L15.9 1.3 L6.4 11.9 L1.7 8.2Z" fill="#006f00" stroke="#006f00" stroke-width="0.35" stroke-linejoin="round"/></svg>
<div class="cb" style="left:1382px;top:385px"></div>
<div class="cb" style="left:1513px;top:385px"></div>
<div class="lk" style="left:278px;top:414px;line-height:14px">35170363027692000181550050000000011000200882</div>
<div class="cell" style="left:641px;top:414px;line-height:14px;transform:scaleX(0.9116);transform-origin:0 0">SUPORTE OMEGA - FILIAL 2</div>
<div class="cb" style="left:178px;top:415px"></div>
<div class="cb" style="left:962px;top:415px"></div>
<svg class="a" style="left:960px;top:413px" width="18" height="14" viewBox="0 0 18 14"><path d="M0.9 7.3 L4.1 5.1 L4.6 5.0 L5.3 6.5 L6.4 7.7 L12.2 1.2 L15.9 1.3 L6.4 11.9 L1.7 8.2Z" fill="#006f00" stroke="#006f00" stroke-width="0.35" stroke-linejoin="round"/></svg>
<div class="cb" style="left:1103px;top:415px"></div>
<svg class="a" style="left:1101px;top:413px" width="18" height="14" viewBox="0 0 18 14"><path d="M0.9 7.3 L4.1 5.1 L4.6 5.0 L5.3 6.5 L6.4 7.7 L12.2 1.2 L15.9 1.3 L6.4 11.9 L1.7 8.2Z" fill="#006f00" stroke="#006f00" stroke-width="0.35" stroke-linejoin="round"/></svg>
<div class="cb" style="left:1250px;top:415px"></div>
<svg class="a" style="left:1248px;top:413px" width="18" height="14" viewBox="0 0 18 14"><path d="M0.9 7.3 L4.1 5.1 L4.6 5.0 L5.3 6.5 L6.4 7.7 L12.2 1.2 L15.9 1.3 L6.4 11.9 L1.7 8.2Z" fill="#006f00" stroke="#006f00" stroke-width="0.35" stroke-linejoin="round"/></svg>
<div class="cb" style="left:1382px;top:415px"></div>
<div class="cb" style="left:1513px;top:415px"></div>
<div class="lk" style="left:278px;top:444px;line-height:14px">35170363027692000181550050000000011000200882</div>
<div class="cell" style="left:641px;top:444px;line-height:14px;transform:scaleX(0.9116);transform-origin:0 0">SUPORTE OMEGA - FILIAL 2</div>
<div class="cb" style="left:178px;top:445px"></div>
<div class="cb" style="left:962px;top:445px"></div>
<svg class="a" style="left:960px;top:443px" width="18" height="14" viewBox="0 0 18 14"><path d="M0.9 7.3 L4.1 5.1 L4.6 5.0 L5.3 6.5 L6.4 7.7 L12.2 1.2 L15.9 1.3 L6.4 11.9 L1.7 8.2Z" fill="#006f00" stroke="#006f00" stroke-width="0.35" stroke-linejoin="round"/></svg>
<div class="cb" style="left:1103px;top:445px"></div>
<svg class="a" style="left:1101px;top:443px" width="18" height="14" viewBox="0 0 18 14"><path d="M0.9 7.3 L4.1 5.1 L4.6 5.0 L5.3 6.5 L6.4 7.7 L12.2 1.2 L15.9 1.3 L6.4 11.9 L1.7 8.2Z" fill="#006f00" stroke="#006f00" stroke-width="0.35" stroke-linejoin="round"/></svg>
<div class="cb" style="left:1250px;top:445px"></div>
<svg class="a" style="left:1248px;top:443px" width="18" height="14" viewBox="0 0 18 14"><path d="M0.9 7.3 L4.1 5.1 L4.6 5.0 L5.3 6.5 L6.4 7.7 L12.2 1.2 L15.9 1.3 L6.4 11.9 L1.7 8.2Z" fill="#006f00" stroke="#006f00" stroke-width="0.35" stroke-linejoin="round"/></svg>
<div class="cb" style="left:1382px;top:445px"></div>
<div class="cb" style="left:1513px;top:445px"></div>
<div class="lk" style="left:278px;top:474px;line-height:14px">35170363027692000181550050000000041000271269</div>
<div class="cell" style="left:641px;top:474px;line-height:14px;transform:scaleX(0.9116);transform-origin:0 0">SUPORTE OMEGA - FILIAL 2</div>
<div class="cb" style="left:178px;top:475px"></div>
<div class="cb" style="left:962px;top:475px"></div>
<svg class="a" style="left:960px;top:473px" width="18" height="14" viewBox="0 0 18 14"><path d="M0.9 7.3 L4.1 5.1 L4.6 5.0 L5.3 6.5 L6.4 7.7 L12.2 1.2 L15.9 1.3 L6.4 11.9 L1.7 8.2Z" fill="#006f00" stroke="#006f00" stroke-width="0.35" stroke-linejoin="round"/></svg>
<div class="cb" style="left:1103px;top:475px"></div>
<svg class="a" style="left:1101px;top:473px" width="18" height="14" viewBox="0 0 18 14"><path d="M0.9 7.3 L4.1 5.1 L4.6 5.0 L5.3 6.5 L6.4 7.7 L12.2 1.2 L15.9 1.3 L6.4 11.9 L1.7 8.2Z" fill="#006f00" stroke="#006f00" stroke-width="0.35" stroke-linejoin="round"/></svg>
<div class="cb" style="left:1250px;top:475px"></div>
<svg class="a" style="left:1248px;top:473px" width="18" height="14" viewBox="0 0 18 14"><path d="M0.9 7.3 L4.1 5.1 L4.6 5.0 L5.3 6.5 L6.4 7.7 L12.2 1.2 L15.9 1.3 L6.4 11.9 L1.7 8.2Z" fill="#006f00" stroke="#006f00" stroke-width="0.35" stroke-linejoin="round"/></svg>
<div class="cb" style="left:1382px;top:475px"></div>
<div class="cb" style="left:1513px;top:475px"></div>
<div class="lk" style="left:278px;top:504px;line-height:14px">35170363027692000181550050000000111000285604</div>
<div class="cell" style="left:641px;top:504px;line-height:14px;transform:scaleX(0.9116);transform-origin:0 0">SUPORTE OMEGA - FILIAL 2</div>
<div class="cell" style="left:1613px;top:504px;line-height:14px">5</div>
<div class="cb" style="left:178px;top:505px"></div>
<div class="cb" style="left:962px;top:505px"></div>
<svg class="a" style="left:960px;top:503px" width="18" height="14" viewBox="0 0 18 14"><path d="M0.9 7.3 L4.1 5.1 L4.6 5.0 L5.3 6.5 L6.4 7.7 L12.2 1.2 L15.9 1.3 L6.4 11.9 L1.7 8.2Z" fill="#006f00" stroke="#006f00" stroke-width="0.35" stroke-linejoin="round"/></svg>
<div class="cb" style="left:1103px;top:505px"></div>
<svg class="a" style="left:1101px;top:503px" width="18" height="14" viewBox="0 0 18 14"><path d="M0.9 7.3 L4.1 5.1 L4.6 5.0 L5.3 6.5 L6.4 7.7 L12.2 1.2 L15.9 1.3 L6.4 11.9 L1.7 8.2Z" fill="#006f00" stroke="#006f00" stroke-width="0.35" stroke-linejoin="round"/></svg>
<div class="cb" style="left:1250px;top:505px"></div>
<svg class="a" style="left:1248px;top:503px" width="18" height="14" viewBox="0 0 18 14"><path d="M0.9 7.3 L4.1 5.1 L4.6 5.0 L5.3 6.5 L6.4 7.7 L12.2 1.2 L15.9 1.3 L6.4 11.9 L1.7 8.2Z" fill="#006f00" stroke="#006f00" stroke-width="0.35" stroke-linejoin="round"/></svg>
<div class="cb" style="left:1382px;top:505px"></div>
<div class="cb" style="left:1513px;top:505px"></div>
<svg class="a" style="left:1511px;top:503px" width="18" height="14" viewBox="0 0 18 14"><path d="M0.9 7.3 L4.1 5.1 L4.6 5.0 L5.3 6.5 L6.4 7.7 L12.2 1.2 L15.9 1.3 L6.4 11.9 L1.7 8.2Z" fill="#006f00" stroke="#006f00" stroke-width="0.35" stroke-linejoin="round"/></svg>
<div class="lk" style="left:278px;top:534px;line-height:14px">35170363027692000181550050000000121000315900</div>
<div class="cell" style="left:641px;top:534px;line-height:14px;transform:scaleX(0.9116);transform-origin:0 0">SUPORTE OMEGA - FILIAL 2</div>
<div class="cell" style="left:1613px;top:534px;line-height:14px">5</div>
<div class="cb" style="left:178px;top:535px"></div>
<div class="cb" style="left:962px;top:535px"></div>
<svg class="a" style="left:960px;top:533px" width="18" height="14" viewBox="0 0 18 14"><path d="M0.9 7.3 L4.1 5.1 L4.6 5.0 L5.3 6.5 L6.4 7.7 L12.2 1.2 L15.9 1.3 L6.4 11.9 L1.7 8.2Z" fill="#006f00" stroke="#006f00" stroke-width="0.35" stroke-linejoin="round"/></svg>
<div class="cb" style="left:1103px;top:535px"></div>
<svg class="a" style="left:1101px;top:533px" width="18" height="14" viewBox="0 0 18 14"><path d="M0.9 7.3 L4.1 5.1 L4.6 5.0 L5.3 6.5 L6.4 7.7 L12.2 1.2 L15.9 1.3 L6.4 11.9 L1.7 8.2Z" fill="#006f00" stroke="#006f00" stroke-width="0.35" stroke-linejoin="round"/></svg>
<div class="cb" style="left:1250px;top:535px"></div>
<svg class="a" style="left:1248px;top:533px" width="18" height="14" viewBox="0 0 18 14"><path d="M0.9 7.3 L4.1 5.1 L4.6 5.0 L5.3 6.5 L6.4 7.7 L12.2 1.2 L15.9 1.3 L6.4 11.9 L1.7 8.2Z" fill="#006f00" stroke="#006f00" stroke-width="0.35" stroke-linejoin="round"/></svg>
<div class="cb" style="left:1382px;top:535px"></div>
<div class="cb" style="left:1513px;top:535px"></div>
<svg class="a" style="left:1511px;top:533px" width="18" height="14" viewBox="0 0 18 14"><path d="M0.9 7.3 L4.1 5.1 L4.6 5.0 L5.3 6.5 L6.4 7.7 L12.2 1.2 L15.9 1.3 L6.4 11.9 L1.7 8.2Z" fill="#006f00" stroke="#006f00" stroke-width="0.35" stroke-linejoin="round"/></svg>
<div class="lk" style="left:278px;top:564px;line-height:14px">35170363027692000181550050000000131000332100</div>
<div class="cell" style="left:641px;top:564px;line-height:14px;transform:scaleX(0.9116);transform-origin:0 0">SUPORTE OMEGA - FILIAL 2</div>
<div class="cell" style="left:1613px;top:564px;line-height:14px">5</div>
<div class="cb" style="left:178px;top:565px"></div>
<div class="cb" style="left:962px;top:565px"></div>
<svg class="a" style="left:960px;top:563px" width="18" height="14" viewBox="0 0 18 14"><path d="M0.9 7.3 L4.1 5.1 L4.6 5.0 L5.3 6.5 L6.4 7.7 L12.2 1.2 L15.9 1.3 L6.4 11.9 L1.7 8.2Z" fill="#006f00" stroke="#006f00" stroke-width="0.35" stroke-linejoin="round"/></svg>
<div class="cb" style="left:1103px;top:565px"></div>
<svg class="a" style="left:1101px;top:563px" width="18" height="14" viewBox="0 0 18 14"><path d="M0.9 7.3 L4.1 5.1 L4.6 5.0 L5.3 6.5 L6.4 7.7 L12.2 1.2 L15.9 1.3 L6.4 11.9 L1.7 8.2Z" fill="#006f00" stroke="#006f00" stroke-width="0.35" stroke-linejoin="round"/></svg>
<div class="cb" style="left:1250px;top:565px"></div>
<svg class="a" style="left:1248px;top:563px" width="18" height="14" viewBox="0 0 18 14"><path d="M0.9 7.3 L4.1 5.1 L4.6 5.0 L5.3 6.5 L6.4 7.7 L12.2 1.2 L15.9 1.3 L6.4 11.9 L1.7 8.2Z" fill="#006f00" stroke="#006f00" stroke-width="0.35" stroke-linejoin="round"/></svg>
<div class="cb" style="left:1382px;top:565px"></div>
<div class="cb" style="left:1513px;top:565px"></div>
<svg class="a" style="left:1511px;top:563px" width="18" height="14" viewBox="0 0 18 14"><path d="M0.9 7.3 L4.1 5.1 L4.6 5.0 L5.3 6.5 L6.4 7.7 L12.2 1.2 L15.9 1.3 L6.4 11.9 L1.7 8.2Z" fill="#006f00" stroke="#006f00" stroke-width="0.35" stroke-linejoin="round"/></svg>
<div class="lk" style="left:278px;top:594px;line-height:14px">35170363027692000181550050000000141000342006</div>
<div class="cell" style="left:641px;top:594px;line-height:14px;transform:scaleX(0.9116);transform-origin:0 0">SUPORTE OMEGA - FILIAL 2</div>
<div class="cell" style="left:1613px;top:594px;line-height:14px">5</div>
<div class="cb" style="left:178px;top:595px"></div>
<div class="cb" style="left:962px;top:595px"></div>
<svg class="a" style="left:960px;top:593px" width="18" height="14" viewBox="0 0 18 14"><path d="M0.9 7.3 L4.1 5.1 L4.6 5.0 L5.3 6.5 L6.4 7.7 L12.2 1.2 L15.9 1.3 L6.4 11.9 L1.7 8.2Z" fill="#006f00" stroke="#006f00" stroke-width="0.35" stroke-linejoin="round"/></svg>
<div class="cb" style="left:1103px;top:595px"></div>
<svg class="a" style="left:1101px;top:593px" width="18" height="14" viewBox="0 0 18 14"><path d="M0.9 7.3 L4.1 5.1 L4.6 5.0 L5.3 6.5 L6.4 7.7 L12.2 1.2 L15.9 1.3 L6.4 11.9 L1.7 8.2Z" fill="#006f00" stroke="#006f00" stroke-width="0.35" stroke-linejoin="round"/></svg>
<div class="cb" style="left:1250px;top:595px"></div>
<svg class="a" style="left:1248px;top:593px" width="18" height="14" viewBox="0 0 18 14"><path d="M0.9 7.3 L4.1 5.1 L4.6 5.0 L5.3 6.5 L6.4 7.7 L12.2 1.2 L15.9 1.3 L6.4 11.9 L1.7 8.2Z" fill="#006f00" stroke="#006f00" stroke-width="0.35" stroke-linejoin="round"/></svg>
<div class="cb" style="left:1382px;top:595px"></div>
<div class="cb" style="left:1513px;top:595px"></div>
<svg class="a" style="left:1511px;top:593px" width="18" height="14" viewBox="0 0 18 14"><path d="M0.9 7.3 L4.1 5.1 L4.6 5.0 L5.3 6.5 L6.4 7.7 L12.2 1.2 L15.9 1.3 L6.4 11.9 L1.7 8.2Z" fill="#006f00" stroke="#006f00" stroke-width="0.35" stroke-linejoin="round"/></svg>
<div class="lk" style="left:278px;top:624px;line-height:14px">35171063027692000181551210000000321001707202</div>
<div class="cell" style="left:641px;top:624px;line-height:14px;transform:scaleX(0.9116);transform-origin:0 0">SUPORTE OMEGA - FILIAL 1</div>
<div class="cell" style="left:1613px;top:624px;line-height:14px">121</div>
<div class="cb" style="left:178px;top:625px"></div>
<div class="cb" style="left:962px;top:625px"></div>
<svg class="a" style="left:960px;top:623px" width="18" height="14" viewBox="0 0 18 14"><path d="M0.9 7.3 L4.1 5.1 L4.6 5.0 L5.3 6.5 L6.4 7.7 L12.2 1.2 L15.9 1.3 L6.4 11.9 L1.7 8.2Z" fill="#006f00" stroke="#006f00" stroke-width="0.35" stroke-linejoin="round"/></svg>
<div class="cb" style="left:1103px;top:625px"></div>
<svg class="a" style="left:1101px;top:623px" width="18" height="14" viewBox="0 0 18 14"><path d="M0.9 7.3 L4.1 5.1 L4.6 5.0 L5.3 6.5 L6.4 7.7 L12.2 1.2 L15.9 1.3 L6.4 11.9 L1.7 8.2Z" fill="#006f00" stroke="#006f00" stroke-width="0.35" stroke-linejoin="round"/></svg>
<div class="cb" style="left:1250px;top:625px"></div>
<svg class="a" style="left:1248px;top:623px" width="18" height="14" viewBox="0 0 18 14"><path d="M0.9 7.3 L4.1 5.1 L4.6 5.0 L5.3 6.5 L6.4 7.7 L12.2 1.2 L15.9 1.3 L6.4 11.9 L1.7 8.2Z" fill="#d10000" stroke="#d10000" stroke-width="0.35" stroke-linejoin="round"/></svg>
<div class="cb" style="left:1382px;top:625px"></div>
<div class="cb" style="left:1513px;top:625px"></div>
<svg class="a" style="left:1511px;top:623px" width="18" height="14" viewBox="0 0 18 14"><path d="M0.9 7.3 L4.1 5.1 L4.6 5.0 L5.3 6.5 L6.4 7.7 L12.2 1.2 L15.9 1.3 L6.4 11.9 L1.7 8.2Z" fill="#006f00" stroke="#006f00" stroke-width="0.35" stroke-linejoin="round"/></svg>
<div class="a" style="left:1676px;top:256px;width:19px;height:407px;background:#fafafa"></div>
<svg class="a" style="left:1676px;top:258px" width="19" height="16" viewBox="0 0 19 16"><path d="M9.5 4.9L14.6 12.4H4.4Z" fill="#8a8a8a" stroke="#8a8a8a" stroke-width="1.8" stroke-linejoin="round"/></svg>
<div class="a" style="left:1680px;top:279px;width:11px;height:340px;background:#8a8a8a;border-radius:6px"></div>
<svg class="a" style="left:1676px;top:626px" width="19" height="16" viewBox="0 0 19 16"><path d="M4.4 4.2H14.6L9.5 11.4Z" fill="#8a8a8a" stroke="#8a8a8a" stroke-width="1.8" stroke-linejoin="round"/></svg>
<div class="a" style="left:22px;top:644px;width:1654px;height:19px;background:#fafafa"></div>
<svg class="a" style="left:24px;top:644px" width="16" height="19" viewBox="0 0 16 19"><path d="M3.9 9.9L11.1 4.6V15.2Z" fill="#8a8a8a" stroke="#8a8a8a" stroke-width="1.8" stroke-linejoin="round"/></svg>
<div class="a" style="left:44px;top:648px;width:416px;height:11px;background:#8a8a8a;border-radius:6px"></div>
<svg class="a" style="left:1658px;top:644px" width="16" height="19" viewBox="0 0 16 19"><path d="M11 9.8L4.2 4.9V14.7Z" fill="#8a8a8a" stroke="#8a8a8a" stroke-width="1.8" stroke-linejoin="round"/></svg>
<div class="a" style="left:1676px;top:644px;width:19px;height:19px;background:#fafafa;border-left:1px solid #e0e0e0;border-top:1px solid #e0e0e0"></div>
<svg class="a" style="left:1676px;top:644px" width="19" height="19" viewBox="0 0 19 19"><path d="M8.6 17.2L16.6 9.4M13.6 17.4L16.6 14.4" stroke="#333" stroke-width="1.2"/></svg>
<div class="a" style="left:22px;top:663px;width:1673px;height:1px;background:#cfcfcf"></div>
<div class="a" style="left:729px;top:673px;font-size:13px;letter-spacing:-0.6px;color:#888;line-height:16px">1 de 1</div>
<svg class="a" style="left:778px;top:673px" width="16" height="16" viewBox="0 0 16 16"><path d="M7.5 3.5L3 8L7.5 12.5M13 3.5L8.5 8L13 12.5" fill="none" stroke="#666" stroke-width="1.3"/></svg>
<svg class="a" style="left:814px;top:673px" width="12" height="16" viewBox="0 0 12 16"><path d="M8.5 3.5L4 8L8.5 12.5" fill="none" stroke="#666" stroke-width="1.3"/></svg>
<div class="a" style="left:838px;top:664px;width:34px;height:34px;background:#1190cb;color:#fff;font-size:14px;text-align:center;line-height:34px">1</div>
<svg class="a" style="left:884px;top:673px" width="12" height="16" viewBox="0 0 12 16"><path d="M3.5 3.5L8 8L3.5 12.5" fill="none" stroke="#666" stroke-width="1.3"/></svg>
<svg class="a" style="left:915px;top:673px" width="16" height="16" viewBox="0 0 16 16"><path d="M3 3.5L7.5 8L3 12.5M8.5 3.5L13 8L8.5 12.5" fill="none" stroke="#666" stroke-width="1.3"/></svg>
<div class="a" style="left:1640px;top:674px;font-size:12px;color:#222;line-height:16px"><b>Total:</b> 12</div>
<div class="a" style="left:1698px;top:368px;width:32px;height:33px;border-radius:50%;background:#efefef;border:1px solid #1a93cc"></div>
<svg class="a" style="left:1702px;top:372px" width="24" height="24" viewBox="0 0 24 24"><path d="M9.2 10.3L13.2 6.5L17.2 10.3M9.2 16.3L13.2 12.5L17.2 16.3" fill="none" stroke="#1190cb" stroke-width="1.5"/></svg>
<div class="a" style="left:1698px;top:460px;width:32px;height:33px;border-radius:50%;background:#efefef;border:1px solid #1a93cc"></div>
<svg class="a" style="left:1702px;top:464px" width="24" height="24" viewBox="0 0 24 24"><path d="M9.2 5.6L13.2 9.3L17.2 5.6M9.2 11.6L13.2 15.3L17.2 11.6" fill="none" stroke="#1190cb" stroke-width="1.5"/></svg>
<div class="bb" style="left:19px;width:269px">Gerar Nota Fiscal</div>
<div class="bb" style="left:301px;width:269px">Visualizar Nota Fiscal</div>
<div class="bb" style="left:583px;width:269px">Processar Nota Fiscal</div>
<div class="bb" style="left:865px;width:269px">Alterar Nota Fiscal</div>
<div class="bb" style="left:1146px;width:270px">Excluir Nota Fiscal</div>
</body></html>
